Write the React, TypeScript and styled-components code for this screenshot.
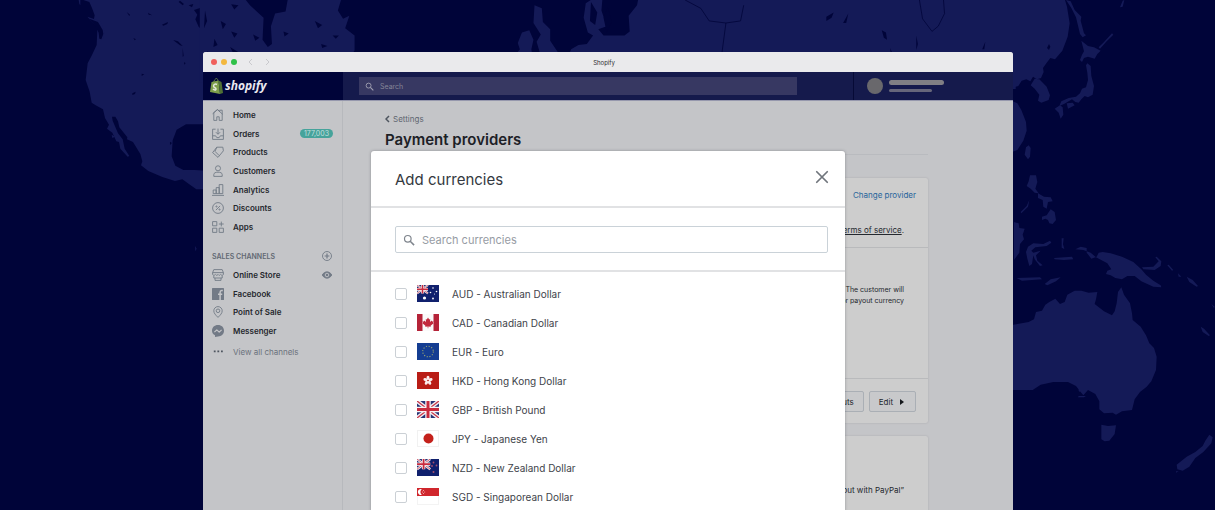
import React from "react";
import styled, { createGlobalStyle } from "styled-components";

const GlobalStyle = createGlobalStyle`
  *, *::before, *::after { box-sizing: border-box; }
  body { margin: 0; background: #000439; }
  body, button, input { font-family: Inter, "Liberation Sans", sans-serif; }
  h1, h2, h3, p, ul { margin: 0; padding: 0; }
  ul { list-style: none; }
  button { cursor: pointer; }
`;

const Page = styled.div`
  position: relative;
  display: flex;
  height: 100vh;
  padding: 52px 202px 0 203px;
  overflow: hidden;
  background: #000439;
`;

const MapArt = styled.svg`
  position: absolute;
  inset: 0;
  width: 100%;
  height: 100%;
  fill: #141a57;
`;

const Browser = styled.div`
  position: relative;
  display: flex;
  flex: 1;
  flex-direction: column;
  min-width: 0;
  overflow: hidden;
  border-radius: 3px 3px 0 0;
  background: #c4c5c8;
`;

const TitleBar = styled.div`
  display: grid;
  grid-template-columns: 1fr auto 1fr;
  align-items: center;
  flex: none;
  height: 20px;
  padding: 0 16px 0 8px;
  background: #eaeaec;
  color: #2b2b2e;
  font-size: 6px;
`;

const Controls = styled.div`
  display: flex;
  align-items: center;
  gap: 4px;
`;

const Light = styled.span<{ $color: string }>`
  width: 6px;
  height: 6px;
  border-radius: 50%;
  background: ${(p) => p.$color};
`;

const History = styled.svg`
  width: 24px;
  height: 8px;
  margin-left: 6px;
  fill: none;
  stroke: #c9c9cd;
`;

const AppHeader = styled.header`
  display: flex;
  flex: none;
  height: 29px;
  border-bottom: 1px solid #9698ad;
  background: #151a4c;
`;

const Brand = styled.a`
  display: flex;
  align-items: center;
  gap: 2px;
  width: 140px;
  padding-left: 7px;
  background: #000439;
  color: #e9e9f0;
  font: italic 700 12px/16px "Open Sans", sans-serif;
  text-decoration: none;
`;

const BagIcon = styled.svg`
  width: 13px;
  height: 16px;
`;

const GlobalSearch = styled.label`
  display: flex;
  align-items: center;
  flex: 1;
  gap: 6px;
  height: 18px;
  margin: 5px 56px 0 16px;
  padding: 0 6px;
  background: #373862;
`;

const SearchInput = styled.input<{ $large?: boolean }>`
  flex: 1;
  min-width: 0;
  padding: 0;
  border: 0;
  outline: 0;
  background: transparent;
  color: ${(p) => (p.$large ? "#3a3f47" : "#c4c5d0")};
  font-size: ${(p) => (p.$large ? 11 : 7)}px;
  &::placeholder {
    color: ${(p) => (p.$large ? "#979ca4" : "#858698")};
    opacity: 1;
  }
`;

const Glass = styled.svg<{ $size: number; $color: string }>`
  flex: none;
  width: ${(p) => p.$size}px;
  height: ${(p) => p.$size}px;
  fill: none;
  stroke: ${(p) => p.$color};
  stroke-width: 2;
`;

const Account = styled.div`
  display: flex;
  align-items: center;
  gap: 6px;
  width: 160px;
  padding-left: 13px;
  border-left: 1px solid #060a36;
`;

const Avatar = styled.span`
  width: 16px;
  height: 16px;
  border-radius: 50%;
  background: #69686c;
`;

const NameLines = styled.span`
  display: flex;
  flex-direction: column;
  gap: 4px;
`;

const NameLine = styled.span<{ $wide?: boolean }>`
  width: ${(p) => (p.$wide ? 55 : 43)}px;
  height: ${(p) => (p.$wide ? 5 : 3)}px;
  border-radius: 3px;
  background: ${(p) => (p.$wide ? "#807f84" : "#66667a")};
`;

const Body = styled.div`
  display: flex;
  flex: 1;
  min-height: 0;
`;

const Sidebar = styled.nav`
  flex: none;
  width: 140px;
  padding: 5px 9px;
  border-right: 1px solid #b7b9bd;
`;

const NavList = styled.ul<{ $height: number }>`
  display: grid;
  grid-auto-rows: 1fr;
  height: ${(p) => p.$height}px;
`;

const NavItem = styled.li`
  display: flex;
  align-items: center;
  justify-content: space-between;
`;

const NavLink = styled.a<{ $muted?: boolean }>`
  display: flex;
  align-items: center;
  gap: 9px;
  color: ${(p) => (p.$muted ? "#6b727c" : "#24282e")};
  font-size: 8px;
  font-weight: ${(p) => (p.$muted ? 400 : 600)};
  line-height: 12px;
  text-decoration: none;
`;

const NavIcon = styled.svg`
  flex: none;
  width: 12px;
  height: 12px;
  fill: none;
  stroke: #727a86;
  stroke-width: 1.5;
  stroke-linejoin: round;
`;

const Count = styled.span`
  padding: 0 4px;
  border-radius: 5px;
  background: #46a39b;
  color: #c3dfdf;
  font-size: 7px;
  line-height: 9px;
`;

const SectionHead = styled.div`
  display: flex;
  align-items: center;
  justify-content: space-between;
  height: 14px;
  margin: 13px 0 3px;
`;

const SectionTitle = styled.h3`
  color: #626973;
  font-size: 7px;
  font-weight: 600;
`;

const IconButton = styled.button`
  display: flex;
  padding: 0;
  border: 0;
  background: none;
`;

const AllChannels = styled.div`
  margin-top: 6px;
`;

const Main = styled.main`
  flex: 1;
  min-width: 0;
  padding: 12px 85px 0 42px;
`;

const BackLink = styled.a`
  display: flex;
  align-items: center;
  gap: 3px;
  color: #5f6670;
  font-size: 8px;
  line-height: 12px;
  text-decoration: none;
`;

const PageTitle = styled.h1`
  height: 30px;
  padding-top: 5px;
  border-bottom: 1px solid #b9bbbf;
  color: #1c2026;
  font-size: 15px;
  font-weight: 600;
  line-height: 20px;
`;

const Card = styled.section<{ $first?: boolean }>`
  margin-top: ${(p) => (p.$first ? 23 : 13)}px;
  border-radius: 2px;
  background: #cdcdcd;
  box-shadow: 0 0 2px #a6a8ac;
`;

const CardPart = styled.div<{ $height: number; $top: number; $line?: boolean; $small?: boolean }>`
  height: ${(p) => p.$height}px;
  padding: ${(p) => p.$top}px 24px 0;
  border-top: ${(p) => (p.$line ? "1px solid #b9babc" : "0")};
  color: #24282e;
  font-size: ${(p) => (p.$small ? 7 : 8)}px;
  line-height: 11px;
  text-align: right;
`;

const CardAction = styled.a`
  display: block;
  margin: 0 -12px 24px 0;
  color: #27649b;
  font-size: 8px;
  line-height: 12px;
  text-decoration: none;
`;

const TermsLink = styled.a`
  color: #24282e;
`;

const Actions = styled.div`
  display: flex;
  justify-content: flex-end;
  gap: 5px;
  margin-right: -12px;
`;

const Button = styled.button`
  display: flex;
  align-items: center;
  gap: 5px;
  height: 21px;
  padding: 0 9px;
  border: 1px solid #aaafb5;
  border-radius: 2px;
  background: #c8c9cb;
  color: #24282e;
  font-size: 8px;
`;

const Caret = styled.svg`
  width: 8px;
  height: 6px;
  fill: #15181c;
`;

const Overlay = styled.div`
  position: absolute;
  inset: 0;
  display: flex;
  justify-content: center;
  align-items: flex-start;
  padding-top: 99px;
`;

const Dialog = styled.div`
  width: 474px;
  border-radius: 3px 3px 0 0;
  background: #fff;
  box-shadow: 0 0 3px rgba(30, 34, 44, 0.35);
`;

const DialogHead = styled.div`
  display: flex;
  align-items: center;
  justify-content: space-between;
  height: 57px;
  padding: 0 16px 4px 24px;
  border-bottom: 2px solid #e1e2e4;
`;

const DialogTitle = styled.h2`
  padding-top: 7px;
  color: #343940;
  font-size: 15px;
  font-weight: 400;
  line-height: 20px;
`;

const CloseIcon = styled.svg`
  width: 14px;
  height: 14px;
  stroke: #70757c;
  stroke-width: 2;
  stroke-linecap: round;
`;

const DialogSearch = styled.div`
  padding: 18px 17px 17px 24px;
  border-bottom: 2px solid #e1e2e4;
`;

const SearchField = styled.label`
  display: flex;
  align-items: center;
  gap: 7px;
  height: 27px;
  padding: 0 7px;
  border: 1px solid #cad2d8;
  border-radius: 2px;
`;

const CurrencyList = styled.ul`
  padding: 7px 24px 0;
`;

const CurrencyRow = styled.label`
  display: flex;
  align-items: center;
  height: 29px;
  color: #3e434a;
  font-size: 10px;
`;

const Check = styled.input`
  appearance: none;
  width: 12px;
  height: 12px;
  margin: 0 10px 0 0;
  border: 1px solid #cbd0d5;
  border-radius: 2px;
  background: #fff;
  &:checked { background: #5c6ac4; }
`;

const Flag = styled.svg`
  width: 22px;
  height: 17px;
  margin-right: 13px;
`;

const NAV = ["Home", "Orders", "Products", "Customers", "Analytics", "Discounts", "Apps"];
const CHANNELS = ["Online Store", "Facebook", "Point of Sale", "Messenger"];

const icons: Record<string, React.ReactNode> = {
  Home: (
    <>
      <path d="M3 19V6l6-5 4 3V2h4v17h-5v-6H8v6z" />
      <path d="M1 8 9 1l9 8" />
    </>
  ),
  Orders: (
    <>
      <path d="M6 2H1v17h18V2h-5M1 13h5l2 3h4l2-3h5" />
      <path d="M10 1v9M6.500 7l3.500 3.500L13.500 7" />
    </>
  ),
  Products: (
    <>
      <path d="M8 2h10l1 6-9 11-9-8z" />
      <path d="M8 2 5 9l7 7" />
    </>
  ),
  Customers: (
    <>
      <circle cx="10" cy="5.500" r="4.200" />
      <path d="M3 19v-3c0-3 3-4 7-4s7 1 7 4v3z" />
    </>
  ),
  Analytics: <path d="M2 16v-6h5v6M7 16V6h5v10M12 16V1h6v15M0 19h20M2 16h16" />,
  Discounts: (
    <>
      <circle cx="10" cy="10" r="9" />
      <path d="m6.500 13.500 7-7" />
      <circle cx="7.500" cy="7.500" r="1" />
      <circle cx="12.500" cy="12.500" r="1" />
    </>
  ),
  Apps: <path d="M1 1h7v7H1zM1 12h7v7H1zM12 12h7v7h-7zM15.500 1v8M11.500 5h8" />,
  "Online Store": (
    <>
      <path d="M3 1h14l2 5v3c-1 2-3 2-4.500 0-1.500 2-3 2-4.500 0-1.500 2-3 2-4.500 0C4 11 2 11 1 9V6z" />
      <path d="M1 6h18M3 11v4h14v-4M5 15v4h10v-4" />
    </>
  ),
  Facebook: (
    <>
      <rect x="0" y="0" width="20" height="20" rx="1" fill="#727a86" stroke="none" />
      <path d="M18 4h-2c-2 0-2.500 1-2.500 3v13M10 10.500h7" stroke="#c4c5c8" strokeWidth="2.500" />
    </>
  ),
  "Point of Sale": (
    <>
      <path d="M10 19C6 15 3 12 3 8a7 7 0 0 1 14 0c0 4-3 7-7 11z" />
      <circle cx="10" cy="8" r="3" />
    </>
  ),
  Messenger: (
    <>
      <path d="M10 0c6 0 10 4 10 9.500S16 19 10 19l-5 1v-3C2 15.500 0 13 0 9.500 0 4 4 0 10 0z" fill="#727a86" stroke="none" />
      <path d="m4 12 4-4 4 4 4-4" stroke="#c4c5c8" strokeWidth="2" />
    </>
  ),
};

const UnionJack = () => (
  <>
    <rect width="22" height="17" fill="#273375" />
    <path d="m0 0 22 17M22 0 0 17" stroke="#f3eef2" strokeWidth="4" />
    <path d="m0 0 22 17M22 0 0 17" stroke="#c73648" strokeWidth="1.300" />
    <path d="M11 0v17M0 8.500h22" stroke="#f8f4f6" strokeWidth="5.500" />
    <path d="M11 0v17M0 8.500h22" stroke="#c92a3d" strokeWidth="3" />
  </>
);

const Canton = () => (
  <g transform="scale(.5)">
    <UnionJack />
  </g>
);

const CURRENCIES: { name: string; flag: React.ReactNode }[] = [
  {
    name: "AUD - Australian Dollar",
    flag: (
      <>
        <rect width="22" height="17" fill="#10206d" />
        <Canton />
        <g fill="#fff">
          <circle cx="7.500" cy="13" r="1.600" />
          <circle cx="16" cy="3" r=".8" />
          <circle cx="13.500" cy="7.500" r=".8" />
          <circle cx="19.500" cy="6.500" r=".8" />
          <circle cx="16" cy="13.500" r=".9" />
          <circle cx="17.500" cy="9" r=".5" />
        </g>
      </>
    ),
  },
  {
    name: "CAD - Canadian Dollar",
    flag: (
      <>
        <rect width="22" height="17" fill="#fafafa" />
        <path d="M0 0h5.500v17H0zM16.500 0H22v17h-5.500z" fill="#b52338" />
        <path d="m11 3.500 1.200 2 1-.6-.2 3 1.700-1.500.4 1 1.400-.2-.6 1.500.7.600-3 2.500.2.900-2.500-.3v1.800h-.6v-1.800l-2.500.3.200-.9-3-2.500.7-.6-.6-1.500 1.400.2.400-1L9 7.900l-.2-3 1 .6z" fill="#c22a3d" />
      </>
    ),
  },
  {
    name: "EUR - Euro",
    flag: (
      <>
        <rect width="22" height="17" fill="#143d92" />
        <circle cx="11" cy="8.500" r="5.300" fill="none" stroke="#9aa673" strokeWidth="1.100" strokeDasharray="1.100 1.675" />
      </>
    ),
  },
  {
    name: "HKD - Hong Kong Dollar",
    flag: (
      <>
        <rect width="22" height="17" fill="#b91d16" />
        <g fill="#fbeeee">
          {[0, 72, 144, 216, 288].map((a) => (
            <ellipse key={a} cx="11" cy="6" rx="1.500" ry="2.300" transform={`rotate(${a} 11 8.500)`} />
          ))}
        </g>
        <circle cx="11" cy="8.500" r=".8" fill="#b91d16" />
      </>
    ),
  },
  { name: "GBP - British Pound", flag: <UnionJack /> },
  {
    name: "JPY - Japanese Yen",
    flag: (
      <>
        <rect x=".5" y=".5" width="21" height="16" fill="#fff" stroke="#f1f1f1" />
        <circle cx="11.500" cy="8.500" r="5" fill="#c4211b" />
      </>
    ),
  },
  {
    name: "NZD - New Zealand Dollar",
    flag: (
      <>
        <rect width="22" height="17" fill="#10206d" />
        <g transform="scale(1.200)">
          <Canton />
        </g>
        <g fill="#a9506f">
          <circle cx="16.500" cy="3.500" r=".9" />
          <circle cx="15" cy="7" r=".9" />
          <circle cx="19.500" cy="6.500" r=".9" />
          <circle cx="16.500" cy="13" r="1" />
        </g>
      </>
    ),
  },
  {
    name: "SGD - Singaporean Dollar",
    flag: (
      <>
        <rect x=".5" y=".5" width="21" height="16" fill="#fff" stroke="#f3f3f3" />
        <rect width="22" height="8" fill="#d0262c" />
        <path d="M4.800 1.300a2.900 2.900 0 1 0 0 5.400 3.300 3.300 0 0 1 0-5.400z" fill="#fff" />
        <g fill="#f4c4c6">
          <circle cx="6.500" cy="2.400" r=".5" />
          <circle cx="5.500" cy="4" r=".5" />
          <circle cx="7.700" cy="4" r=".5" />
          <circle cx="6.500" cy="5.500" r=".5" />
        </g>
      </>
    ),
  },
];

const WorldMap = () => (
  <MapArt viewBox="0 0 1215 510" preserveAspectRatio="xMidYMin slice" aria-hidden="true">
    {/* North America */}
    <g transform="scale(.33333)">
      <path d="M236 0h5v16l-3-4zM250 0l18 6 8 18 8 22-2 10 10 34-2 45-14 30-13 25-6 50 12 35 6 33 12 8 22 12 6 26 12 20-6 12 16 12 12 26 8 2 4 20 22 24 5-2-14-22-6-28-14-18-16-38-2-12 10 0 8 14 4 18 24 30-1 6 18 8 22 36 6 22-4 12 22 17 42 18 38 12 22-5 24 17 18 13h30v-56l-35-2-34 0-24-13-11-28 3-48 12-32 28-16h61L630 0z" />
      <path d="M262 50l40 14 12 30-4 22-14-14-6-22zM335 404l10 6-8 4zM585 738l5 8-4 8z" />
      <g fill="#000439">
        <path d="m268 56 26 10 14 24 2 12-6 16-6-2-2-18-12-22zM582 30l18-6 16 10-2 30-6 28-12-12-10-22 6-14zM425 221l8 2-8 5zM397 280l10-5-2 7-8 3zM486 74l18-8-2 6-12 5zM380 36l10 8-2 4zM400 114l8 4-4 3zM484 122l18 4M520 120l14 4 14 14-8-2-16-12zM548 144l3 24-3 2zM510 425l6 4-6 6zM553 186l4 4-5 4zM444 38l12 8-10-2zM540 2l12 10-4 4-12-10zM566 16l14-4-4 10z" />
      </g>
    </g>
    {/* Northern coastlines above the window */}
    <g transform="scale(.523) translate(382 0)">
      <path d="M0 0h270l-6 20 10 16 12-6-8 24 18 14v28l-10 22 10 8 0 12-12 20H0z" />
      <path d="M640 10l14 6 2 26 14 14 0 22 16 24-6 20 22-8 8-20 14-8 16-2 12-16-10-6-8-28 4-28 16-10h16l-2 24 10 30-16 6 10 12 40 0 10-8-2-30 16-20 6-30H1560V170H640l26-24-24-8 2-10 22-8-12-6-10-34 8-14-14-22zM616 62l14-4 8 18-4 18 2 14-26 8-6-12 8-10-4-12z" />
      <g fill="#000439">
        <path d="M88 0h80l-4 22-20 4-8 24 2 34-8 6-10-14 2-42-26-24zM30 156l12-24 24-10 16 14-6 20zM192 148l14-20 40-8 30-16 22-6v34l-14 22-10-24-16 18-30 0 4 12h-40zM60 8l14 2-8 8zM10 20l4 20-6 14zM40 40l10 6-6 10zM60 60l12 4-6 8zM28 74l6 12-8 4zM102 66l12 6-8 6zM58 90l16 10-10 2zM14 98l12 6-10 4zM220 40l14 8-8 6zM232 84l12 4-10 4zM160 60l10 4-8 6zM254 68l12 0-6 6z" />
        <path d="M748 4l12 20-4 24-10-8zM780 14l8 28-10 20-6-28zM1256 118l8 2 6 14 10 2-6 6-14-8zM1198 32l14-8-4 10-10 6zM1230 44l10-18-4 18zM1370 68l3 16-3 12zM1304 58l8 4 2 14-6-4zM1320 92l6 14 4 30-6-10zM1496 94l6-14-2 14z" />
      </g>
      <g fill="none" stroke="#000439" strokeWidth="1.500">
        <path d="M928 0l30 16 16 24 32 4-8 60-10 20-4 28M1006 44l28-4 6-30M1376 0l6 36 18 24 12-10 12-24-2-26" />
      </g>
    </g>
    {/* East Asia, Oceania */}
    <g transform="translate(1010) scale(.33333)">
      <path d="M0 0h165l6 20 8 50-6 40-16 42-22 26-14-4-12 16-10 14 2 12-8 18-12 4-12-8-8 14-12-6-14 4-10 16-25 8zM74 236l14 2 22 22 10 26-4 14-22 8-10-6 4-18-14-18-12-10zM0 300l22 10 12 20 14 36 2 26-10 30-18 28-22 8z" />
      <path d="M168 0l14 4 12 26 20 20-2 12 10 38 6 6-10 6-8-10-12-50-14-28zM214 122l20 16 18 4 20 10-10 10-8 14-20-6-12 4-6 12-6-6 6-16 6-10zM266 142l14-14 26-28 4 4-20 20-20 22zM232 190l10 8 2 30 8 30-4 26-14 8-10-4-10 10-8 10-10-2-10-8-24 14-14 6 6-14 22-10 22-4 12-10 6-14 12-4 6-22-2-22-4-22zM150 316l8 6 2 22-8 12-6-18-12-12zM170 310l18-2 6 8-20 10zM330 22l8-20 5-2-5 20z" />
      <path d="M56 436l6 8-2 26-6 8-10-14 4-22zM60 526l18 0 4 20-6 20 10 14-12-2-12-12-12-8 6-14zM84 580l18 10 20 2 6 12-14 2-4 20-10-6-2-20-14-6zM96 650l14-4 12-18 12 8 4 24-10 12-10-2-4-10-8-4-10 4zM32 636l18-18 8-18-4 20-20 20zM12 666l14 4 2 14 16 2-6 18 4 14-12 14-2 26-16 22zM54 740l16-10 30 2 20-10 4 6-14 10-34 4-12 10 6 6 22-6-14 14 4 16 16 14-8 2-16-20-4-12-4 26-8 6-6-22-4-20zM155 715l6 0-2 18 4 14-8-4zM132 774l54-4 4 8-28 2-28-2zM20 834l70-2 6 6-60 4zM104 852l18-14 30-6-14 12-26 12zM196 748l16-8 18 4 0 14 14 18 16-6 6-12 12-2 24 4 34 10 34 16 24 22 14 16 22 18 22 14 2 6-24-2-36-16-20-16-22 0-16 10-20-4-14-8-14-4 4-10 12-4-12-18-34-18-16-14-22-8zM396 802l34-2 16-16-10-12 4-2 14 14-2 14-18 12-34-2zM476 794l14 16-4 2-14-16zM504 820l10 10-8 0zM530 830l18 10 16 18-4 2-22-14zM572 980l10 6 18 20-4 2-18-12zM604 912l10 8-2 4z" />
      <path d="M0 976l56-10 16-8 6-22 18-4 10-18 12-8 18-10 14 16 14-6 8-22 22-12 20 0 22 6 26-2-4 22-4 14 28 22 24 12 8-12 6-24 4-34 10-14 8 22 18 26 6 30 2 20 24 20 16 26 10 24 14 14 8 26-2 40-14 34-14 16-20 16-16 22-8 32-30 4-18 10-10-6-26 2-14-12 0-24-12-22-22-12-14 16-10-12-12-16-24-12-44 0-38 8-24 16H0zM274 1274l20 4 24-2-4 26-16 20-14 2-10-6zM205 1170l22-24 6-2-14 22-10 10zM206 1188l22 0-6 4-18 0zM598 1304l10 8-4 18-24 26-24 18-18 26-20 12-16-4-2-14 30-24 26-14 22-18 8-16zM498 1414l8 0-8 4z" />
      <path d="M117 132l4 8-4 10-6-6z" fill="#000439" />
    </g>
  </MapArt>
);

const SearchGlyph = ({ size, color }: { size: number; color: string }) => (
  <Glass $size={size} $color={color} viewBox="0 0 20 20" aria-hidden="true">
    <circle cx="8" cy="8" r="5.500" />
    <path d="m12 12 6.500 6.500" strokeWidth="2.500" />
  </Glass>
);

const Item = ({ label, children }: { label: string; children?: React.ReactNode }) => (
  <NavItem>
    <NavLink href="#">
      <NavIcon viewBox="0 0 20 20" aria-hidden="true">{icons[label]}</NavIcon>
      {label}
    </NavLink>
    {children}
  </NavItem>
);

export default function App() {
  return (
    <>
      <GlobalStyle />
      <Page>
        <WorldMap />
        <Browser>
          <TitleBar>
            <Controls>
              <Light $color="#f0605c" />
              <Light $color="#f3b83f" />
              <Light $color="#2fc148" />
              <History viewBox="0 0 24 8" aria-hidden="true">
                <path d="M5 1 2 4l3 3M19 1l3 3-3 3" />
              </History>
            </Controls>
            <span>Shopify</span>
          </TitleBar>
          <AppHeader>
            <Brand href="#">
              <BagIcon viewBox="0 0 26 32" aria-hidden="true">
                <path d="M3 8 17 5l3 27L0 28z" fill="#7e9f4b" />
                <path d="m17 5 6 3 3 22-6 2z" fill="#4f7135" />
                <path d="M7 10c1-6 4-9 6-9s3 3 3 7" fill="none" stroke="#7e9f4b" strokeWidth="1.500" />
                <path d="M14 13c-4-2-7 0-7 3 0 4 5 3 5 6 0 3-4 2-6 0" fill="none" stroke="#e4e8dc" strokeWidth="3" />
              </BagIcon>
              shopify
            </Brand>
            <GlobalSearch>
              <SearchGlyph size={9} color="#a0a0b2" />
              <SearchInput type="search" placeholder="Search" aria-label="Search" />
            </GlobalSearch>
            <Account>
              <Avatar />
              <NameLines>
                <NameLine $wide />
                <NameLine />
              </NameLines>
            </Account>
          </AppHeader>
          <Body>
            <Sidebar>
              <NavList $height={130}>
                {NAV.map((label) => (
                  <Item key={label} label={label}>
                    {label === "Orders" && <Count>177,003</Count>}
                  </Item>
                ))}
              </NavList>
              <SectionHead>
                <SectionTitle>SALES CHANNELS</SectionTitle>
                <IconButton aria-label="Add sales channel">
                  <NavIcon viewBox="0 0 20 20">
                    <circle cx="10" cy="10" r="7.500" />
                    <path d="M10 6v8M6 10h8" strokeWidth="2" />
                  </NavIcon>
                </IconButton>
              </SectionHead>
              <NavList $height={74}>
                {CHANNELS.map((label) => (
                  <Item key={label} label={label}>
                    {label === "Online Store" && (
                      <IconButton aria-label="View online store">
                        <NavIcon viewBox="0 0 20 20">
                          <path d="M2 10c4-7 12-7 16 0-4 7-12 7-16 0z" fill="#727a86" />
                          <circle cx="10" cy="10" r="3" fill="#727a86" stroke="#c4c5c8" />
                        </NavIcon>
                      </IconButton>
                    )}
                  </Item>
                ))}
              </NavList>
              <AllChannels>
                <NavLink href="#" $muted>
                  <NavIcon viewBox="0 0 20 20" aria-hidden="true">
                    <path d="M3 9h3M9 9h3M15 9h3" stroke="#4e555f" strokeWidth="3" />
                  </NavIcon>
                  View all channels
                </NavLink>
              </AllChannels>
            </Sidebar>
            <Main>
              <BackLink href="#">
                <svg width="5" height="8" viewBox="0 0 5 8" fill="none" stroke="#4e555f" strokeWidth="1.500" aria-hidden="true">
                  <path d="M4 1 1 4l3 3" />
                </svg>
                Settings
              </BackLink>
              <PageTitle>Payment providers</PageTitle>
              <Card $first>
                <CardPart $height={69} $top={11}>
                  <CardAction href="#">Change provider</CardAction>
                  <TermsLink href="#">terms of service</TermsLink>.
                </CardPart>
                <CardPart $height={131} $top={36} $line $small>
                  <p>The customer will</p>
                  <p>or payout currency</p>
                </CardPart>
                <CardPart $height={45} $top={12} $line>
                  <Actions>
                    <Button>Payouts</Button>
                    <Button>
                      Edit
                      <Caret viewBox="0 0 8 6" aria-hidden="true">
                        <path d="m2 0 4 3-4 3z" />
                      </Caret>
                    </Button>
                  </Actions>
                </CardPart>
              </Card>
              <Card>
                <CardPart $height={90} $top={49}>
                  <p>Checkout with PayPal”</p>
                </CardPart>
              </Card>
            </Main>
          </Body>
          <Overlay>
            <Dialog role="dialog" aria-labelledby="dialog-title">
              <DialogHead>
                <DialogTitle id="dialog-title">Add currencies</DialogTitle>
                <IconButton aria-label="Close">
                  <CloseIcon viewBox="0 0 16 16">
                    <path d="m2 2 12 12M14 2 2 14" />
                  </CloseIcon>
                </IconButton>
              </DialogHead>
              <DialogSearch>
                <SearchField>
                  <SearchGlyph size={12} color="#7f858d" />
                  <SearchInput $large type="search" placeholder="Search currencies" aria-label="Search currencies" />
                </SearchField>
              </DialogSearch>
              <CurrencyList>
                {CURRENCIES.map((c) => (
                  <li key={c.name}>
                    <CurrencyRow>
                      <Check type="checkbox" />
                      <Flag viewBox="0 0 22 17" aria-hidden="true">{c.flag}</Flag>
                      {c.name}
                    </CurrencyRow>
                  </li>
                ))}
              </CurrencyList>
            </Dialog>
          </Overlay>
        </Browser>
      </Page>
    </>
  );
}
